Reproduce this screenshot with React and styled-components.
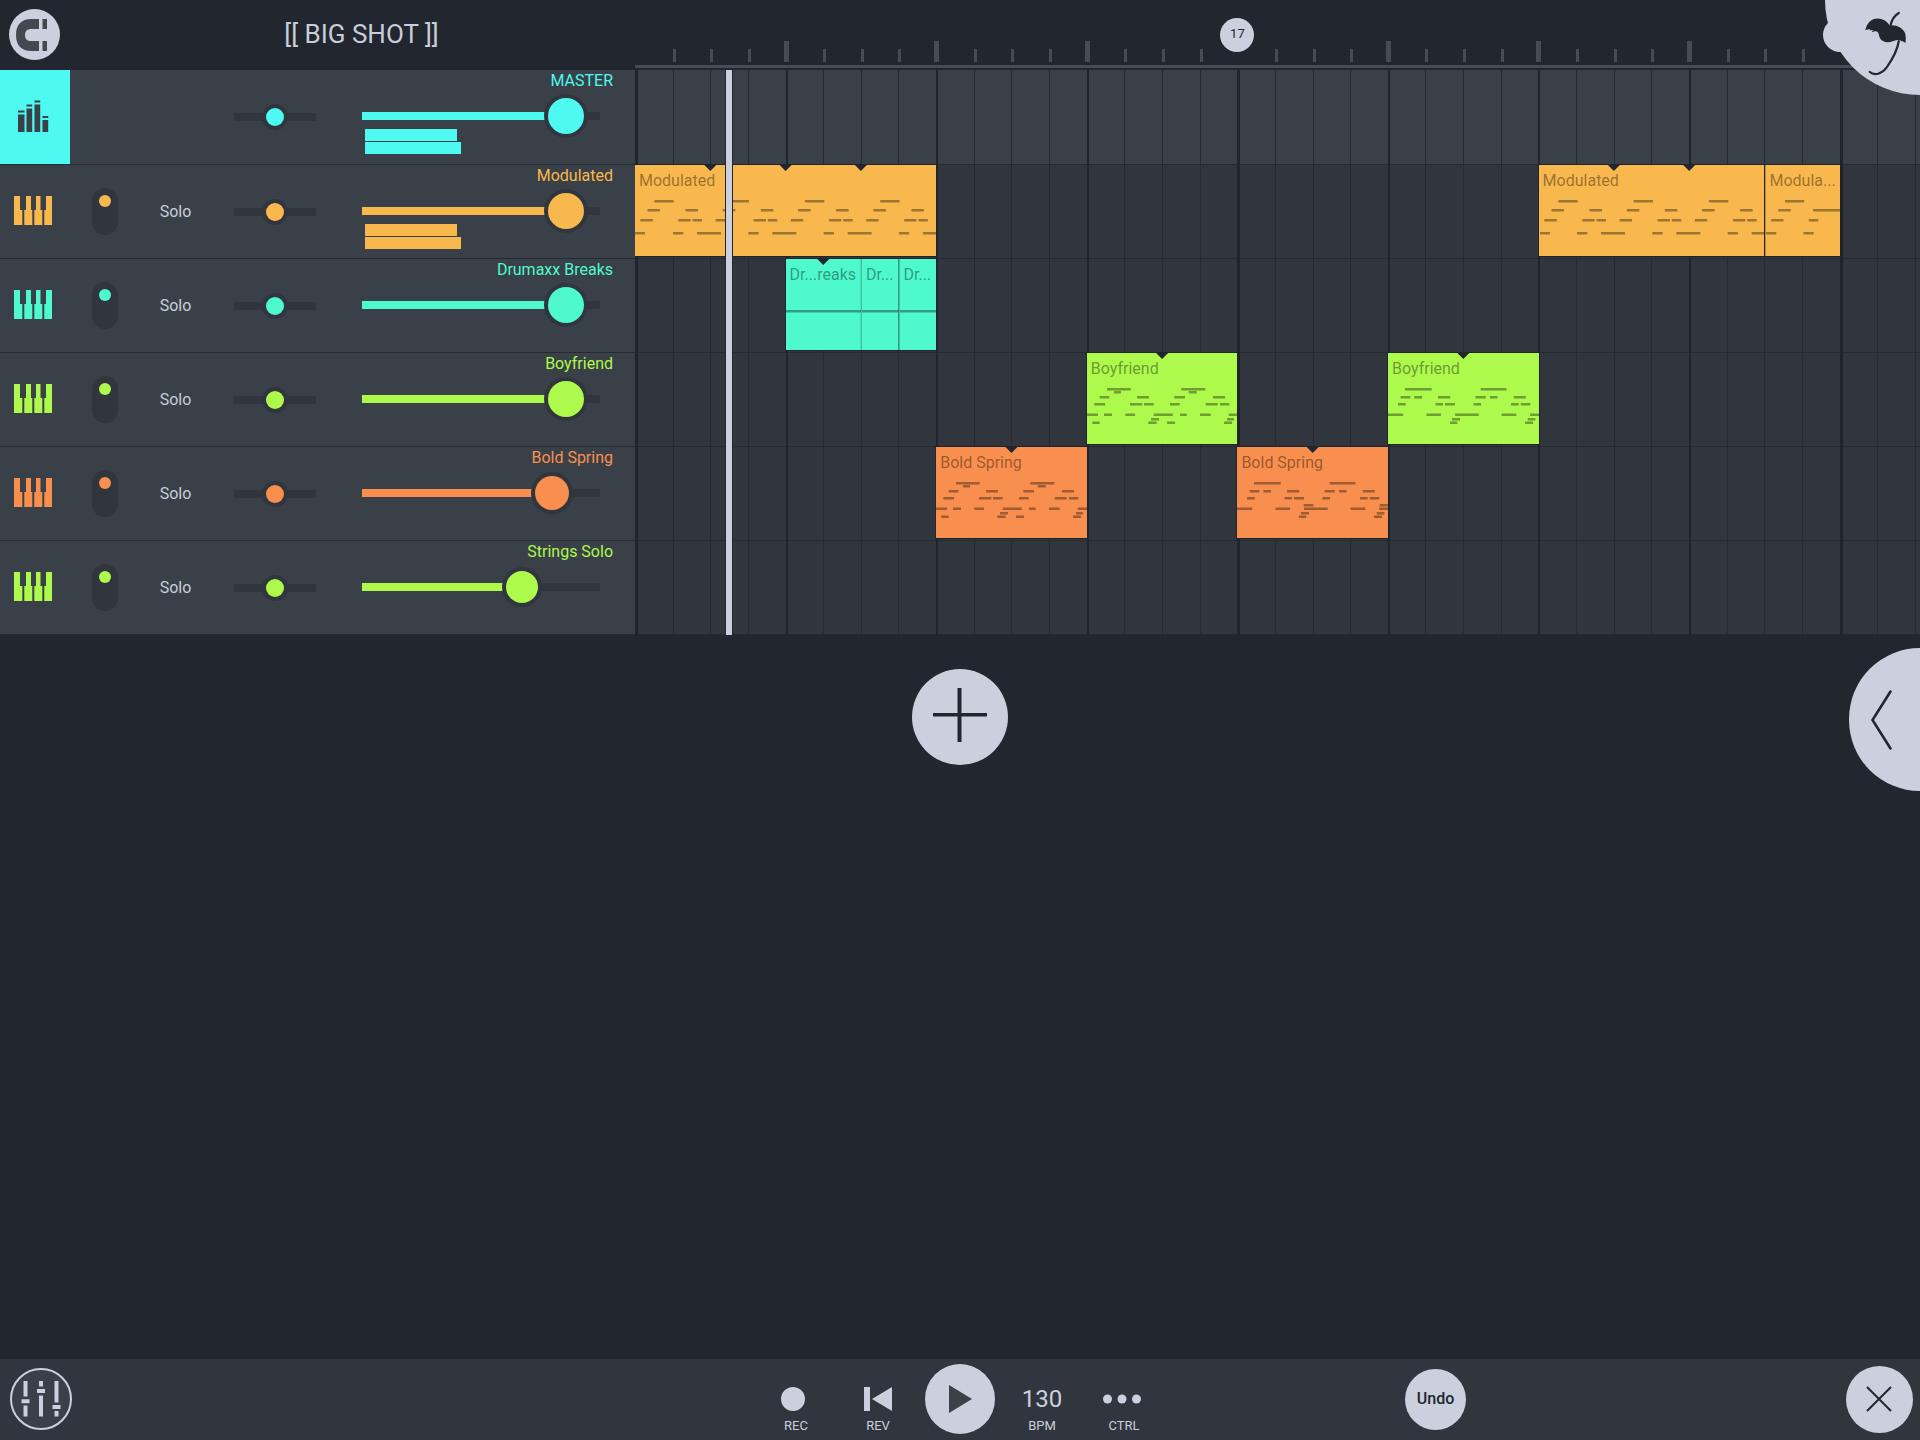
import React from "react";
import styled, { createGlobalStyle, css } from "styled-components";

const color = {
  ink: "#22262e",
  bar: "#31353d",
  panel: "#3a4047",
  line: "#262a31",
  lineStrong: "#20242b",
  tick: "#474c54",
  light: "#cad0de",
  text: "#c8cdd8",
  cyan: "#4df9f0",
  amber: "#f8b84e",
  mint: "#4ef9cb",
  lime: "#adf94c",
  orange: "#f98f4e",
};

const VISIBLE_BARS = 34.13;
const BAR_UNITS = 37.64;
const CLIP_UNITS = 91;
const PLAYHEAD_BAR = 2.41;
const barPercent = (bars) => `${(bars / VISIBLE_BARS) * 100}%`;

const GlobalStyle = createGlobalStyle`
  *, *::before, *::after { box-sizing: border-box; }
  body {
    margin: 0;
    background: ${color.ink};
    color: ${color.text};
    font-family: Roboto, "Noto Sans", sans-serif;
    font-size: 16px;
  }
  button, input { font: inherit; color: inherit; margin: 0; }
  button { padding: 0; border: 0; background: none; cursor: pointer; }
  svg { display: block; }
`;

/* ---------- data ---------- */

const MODULATED_NOTES = [
  [19.3, 38.7, 36],
  [12.5, 25, 45],
  [50.5, 63, 45],
  [5.3, 17.7, 55],
  [43.3, 55.7, 55],
  [57.5, 67, 55],
  [38, 48.3, 68],
  [62, 86, 68],
];

const repeatNotes = (notes, period, times) =>
  Array.from({ length: times }, (_, i) =>
    notes.map(([from, to, y]) => [from + i * period, to + i * period, y])
  ).flat();

const MODULATED_TAIL = [
  [19.3, 38.7, 36],
  [12.5, 25, 45],
  [47.7, 76, 45],
  [5.3, 17.7, 55],
  [43.3, 53, 55],
  [0, 10.4, 68],
  [38, 48.3, 68],
];

const BUSY_RIFF = [
  [20, 43.7, 36], [94.3, 118.3, 36],
  [27, 34, 39], [101.7, 109.7, 39],
  [12.7, 22.3, 44], [50, 62, 44], [87.3, 98, 44], [126, 138, 44],
  [7.3, 18, 51], [43, 55.3, 51], [57, 66.7, 51], [83, 92.7, 51], [118.7, 130.7, 51], [133, 142.3, 51],
  [0, 11, 61.5], [17, 25, 61.5], [38.3, 48, 61.5], [66.7, 85.7, 61.5], [93, 99.7, 61.5], [113, 123.7, 61.5], [141.7, 151, 61.5],
  [64, 72, 66], [140, 147, 66],
  [5.3, 12.7, 69.5], [61.3, 69.7, 69.5], [80, 88, 69.5], [137, 145, 69.5],
];

const CALM_RIFF = [
  [17, 43.7, 36], [92.7, 118.5, 36],
  [12.7, 22.3, 44], [26.3, 34, 44], [50, 62.3, 44], [87.5, 97.7, 44], [102, 109.5, 44], [125.7, 137.7, 44],
  [10, 17.7, 51], [47.5, 55, 51], [57, 67, 51], [85.5, 93, 51], [123, 130.7, 51], [132.7, 142.3, 51],
  [0, 15.2, 61.5], [38.5, 53, 61.5], [67, 90.7, 61.5], [113.5, 128.3, 61.5], [142, 151, 61.5],
  [64, 72, 66], [139.7, 147.3, 66],
  [62, 69.3, 69.5], [137, 145, 69.5],
];

const CALM_RIFF_HIGH = [...CALM_RIFF, [66.7, 76.3, 58], [142.7, 151, 58]];

const HIT_LINE = (bars) => [[0, bars * BAR_UNITS, 52]];

const TRACKS = [
  { name: "MASTER", color: color.cyan, master: true, volume: 92, knob: 36, meter: true, clips: [] },
  {
    name: "Modulated", color: color.amber, volume: 92, knob: 36, meter: true,
    clips: [
      { label: "Modulated", start: 0, bars: 8, notches: [2, 4, 6], notes: [[0, 10, 68], ...repeatNotes(MODULATED_NOTES, 75.28, 4)] },
      { label: "Modulated", start: 24, bars: 6, notches: [2, 4], notes: [[1, 11, 68], ...repeatNotes(MODULATED_NOTES, 75.28, 3)] },
      { label: "Modula...", start: 30, bars: 2, joined: true, notes: MODULATED_TAIL },
    ],
  },
  {
    name: "Drumaxx Breaks", color: color.mint, volume: 92, knob: 36,
    clips: [
      { label: "Dr...reaks", start: 4, bars: 2, notches: [1], notes: HIT_LINE(2) },
      { label: "Dr...", start: 6, bars: 1, joined: true, notes: HIT_LINE(1) },
      { label: "Dr...", start: 7, bars: 1, joined: true, notes: HIT_LINE(1) },
    ],
  },
  {
    name: "Boyfriend", color: color.lime, volume: 92, knob: 36,
    clips: [
      { label: "Boyfriend", start: 12, bars: 4, notches: [2], notes: BUSY_RIFF },
      { label: "Boyfriend", start: 20, bars: 4, notches: [2], notes: CALM_RIFF },
    ],
  },
  {
    name: "Bold Spring", color: color.orange, volume: 85, knob: 34,
    clips: [
      { label: "Bold Spring", start: 8, bars: 4, notches: [2], notes: BUSY_RIFF },
      { label: "Bold Spring", start: 16, bars: 4, notches: [2], notes: CALM_RIFF_HIGH },
    ],
  },
  { name: "Strings Solo", color: color.lime, volume: 70, knob: 32, clips: [] },
];

/* ---------- page frame ---------- */

const Page = styled.div`
  position: relative;
  display: flex;
  flex-direction: column;
  min-height: 100vh;
  overflow: hidden;
`;

const Playlist = styled.main`
  display: grid;
  grid-template-columns: 635px minmax(0, 1fr);
`;

const RoundButton = styled.button`
  display: flex;
  align-items: center;
  justify-content: center;
  flex: none;
  width: ${(p) => p.$size}px;
  height: ${(p) => p.$size}px;
  border-radius: 50%;
  background: ${color.light};
  color: ${color.ink};
`;

/* ---------- header ---------- */

const SongHeader = styled.header`
  display: flex;
  align-items: center;
  height: 69px;
  padding-left: 9px;
`;

const SongTitle = styled.h1`
  flex: 1;
  margin: 0;
  padding: 0 0 2px 28px;
  text-align: center;
  font-size: 26px;
  line-height: 28px;
  font-weight: 400;
`;

const Ruler = styled.div`
  position: relative;
  display: flex;
  align-items: flex-end;
  height: 68px;
  margin-bottom: 2px;
  overflow: hidden;
  border-bottom: 3px solid ${color.tick};
`;

const RulerBar = styled.div`
  flex: 0 0 calc(100% / ${VISIBLE_BARS});
  padding-bottom: 3px;
`;

const Tick = styled.div`
  width: 3px;
  height: 13px;
  background: ${color.tick};
  ${(p) => p.$major && css`
    width: 5px;
    height: 21px;
    margin-left: -2px;
  `}
`;

const Marker = styled.div`
  position: absolute;
  top: 18px;
  width: 34px;
  height: 34px;
  margin-left: -17px;
  border-radius: 50%;
  background: ${color.light};
  color: ${color.ink};
  font-size: 13px;
  line-height: 32px;
  text-align: center;
`;

/* ---------- track controls ---------- */

const rowHeight = css`
  height: ${(p) => (p.$master ? 95 : 94)}px;
  border-bottom: 1px solid ${color.line};
`;

const TrackRow = styled.section`
  ${rowHeight}
  display: grid;
  grid-template-columns: 70px 70px 71px 127px 275px;
  grid-template-areas: "icon toggle solo pan volume";
  align-items: center;
  justify-items: center;
  background: ${color.panel};
  color: ${(p) => p.$color};
`;

const TrackIcon = styled.button`
  grid-area: icon;
  display: flex;
  align-items: center;
  width: 100%;
  height: 100%;
  padding: 0 0 2px 14px;
  color: ${(p) => (p.$master ? color.panel : "inherit")};
  background: ${(p) => (p.$master ? p.$color : "none")};
`;

const MuteToggle = styled.input`
  grid-area: toggle;
  appearance: none;
  display: flex;
  justify-content: center;
  align-items: flex-end;
  width: 26px;
  height: 47px;
  padding: 7px 0;
  border-radius: 13px;
  background: ${color.bar};
  &:checked { align-items: flex-start; }
  &::before {
    content: "";
    width: 12px;
    height: 12px;
    border-radius: 50%;
    background: ${(p) => p.$color};
  }
`;

const SoloButton = styled.button`
  grid-area: solo;
  color: ${color.text};
  line-height: 20px;
`;

const Slider = styled.input`
  appearance: none;
  display: block;
  height: 8px;
  background: none;
  &::-webkit-slider-runnable-track {
    height: 8px;
    background: linear-gradient(${(p) => p.$color}, ${(p) => p.$color}) 0 0 / ${(p) => p.$fill}% 100% no-repeat ${color.bar};
  }
  &::-webkit-slider-thumb {
    appearance: none;
    width: ${(p) => p.$knob}px;
    height: ${(p) => p.$knob}px;
    margin-top: ${(p) => (8 - p.$knob) / 2}px;
    border-radius: 50%;
    background: ${(p) => p.$color};
    box-shadow: 0 0 0 4px ${color.bar};
  }
`;

const PanSlider = styled(Slider)`
  grid-area: pan;
  width: 82px;
`;

const VolumeGroup = styled.div`
  grid-area: volume;
  align-self: start;
  width: 100%;
`;

const TrackName = styled.label`
  display: block;
  text-align: right;
  line-height: 22px;
`;

const VolumeSlider = styled(Slider)`
  width: 238px;
  margin: 20px 0 0 24px;
`;

const Meter = styled.div`
  display: grid;
  gap: 1px;
  margin: 9px 0 0 27px;
`;

const MeterBar = styled.div`
  width: ${(p) => p.$width}px;
  height: 12px;
  background: currentColor;
`;

/* ---------- arrangement ---------- */

const Arrangement = styled.div`
  position: relative;
  overflow: hidden;
`;

const Lane = styled.div`
  ${rowHeight}
  position: relative;
  background: ${(p) => (p.$master ? color.panel : color.bar)};
`;

const GridLines = styled.div`
  position: absolute;
  inset: 0;
  display: flex;
`;

const GridBar = styled.div`
  flex: 0 0 calc(100% / ${VISIBLE_BARS});
  border-left: ${(p) => (p.$index % 16 === 0 ? 3 : p.$index % 4 === 0 ? 2 : 1)}px solid
    ${(p) => (p.$index % 4 === 0 ? color.lineStrong : color.line)};
`;

const ClipLayer = styled.div`
  position: absolute;
  inset: 0;
`;

const ClipLane = styled.div`
  ${rowHeight}
  position: relative;
  border-color: transparent;
`;

const ClipBox = styled.div`
  position: absolute;
  z-index: 1;
  top: 0;
  bottom: 2px;
  overflow: hidden;
  background: ${(p) => p.$color};
  border-left: ${(p) => (p.$joined ? "1px solid rgba(0, 0, 0, 0.22)" : "0")};
  box-shadow: 0 0 0 1px ${color.lineStrong};
  clip-path: inset(${(p) => (p.$joined ? "-1px -1px -1px 0" : "-1px")});
`;

const ClipLabel = styled.span`
  position: relative;
  display: block;
  padding: 7px 4px 0;
  white-space: nowrap;
  line-height: 18px;
  color: rgba(0, 0, 0, 0.4);
`;

const ClipNotes = styled.svg`
  position: absolute;
  inset: 0;
  width: 100%;
  height: 100%;
  fill: rgba(0, 0, 0, 0.36);
`;

const Notch = styled.i`
  position: absolute;
  top: 0;
  width: 12px;
  height: 6px;
  margin-left: -6px;
  background: ${color.ink};
  clip-path: polygon(0 0, 100% 0, 50% 100%);
`;

const Playhead = styled.div`
  position: absolute;
  z-index: 2;
  top: 0;
  bottom: 0;
  width: 6px;
  background: ${color.light};
  box-shadow: 0 0 0 1px ${color.ink};
`;

/* ---------- workspace and overlays ---------- */

const Workspace = styled.div`
  position: relative;
  flex: 1;
  display: flex;
  justify-content: center;
  align-items: flex-start;
  padding-top: 34px;
`;

const DrawerHandle = styled.button`
  position: absolute;
  top: 13px;
  right: 0;
  width: 71px;
  height: 143px;
  padding-left: 22px;
  border-radius: 72px 0 0 72px;
  background: ${color.light};
`;

const HomeButton = styled.button`
  position: absolute;
  z-index: 3;
  top: 0;
  right: 0;
  width: 95px;
  height: 95px;
  border-radius: 0 0 0 95px;
  background: ${color.light};
`;

/* ---------- transport ---------- */

const Footer = styled.footer`
  display: grid;
  grid-template-columns: 1fr auto 1fr;
  align-items: center;
  min-height: 81px;
  padding-bottom: 1px;
  background: ${color.bar};
`;

const FooterStart = styled.div`
  padding-left: 10px;
`;

const FooterEnd = styled.div`
  display: flex;
  align-items: center;
  justify-content: space-between;
  padding: 0 7px 0 240px;
`;

const MixerButton = styled(RoundButton)`
  border: 2px solid ${color.light};
  background: ${color.panel};
  color: ${color.light};
`;

const UndoButton = styled(RoundButton)`
  padding-bottom: 2px;
  font-weight: 500;
`;

const Transport = styled.div`
  display: flex;
  align-items: center;
`;

const TransportButton = styled.button`
  display: flex;
  flex-direction: column;
  align-items: center;
  width: 82px;
  height: 80px;
  padding-top: 22px;
  color: ${color.light};
`;

const TransportIcon = styled.span`
  display: flex;
  align-items: center;
  justify-content: center;
  height: 36px;
  font-size: 24px;
`;

const TransportLabel = styled.span`
  display: block;
  font-size: 13px;
  line-height: 18px;
`;

const PlayButton = styled(RoundButton)`
  margin: 0 6px;
`;

/* ---------- icons ---------- */

const MagnetIcon = () => (
  <svg width="38" height="32" viewBox="0 0 38 32" fill="#424951">
    <path d="M23 0H15.500C5 0 0 6 0 16S5 32 15.500 32H23V22H15.500C11 22 9 20 9 16S11 10 15.500 10H23Z" />
    <path d="M26.500 0H31V10H26.500ZM26.500 22H31V32H26.500Z" />
  </svg>
);

const KeysIcon = () => (
  <svg width="38" height="29" viewBox="0 0 38 29" fill="currentColor">
    <path d="M0 0H6V14H8.300V29H0ZM12 0H17V14H18.300V29H10.300V14H12ZM22 0H26.500V14H28.300V29H20.300V14H22ZM32 0H38V29H30.300V14H32Z" />
  </svg>
);

const LevelsIcon = () => (
  <svg width="38" height="32" viewBox="0 0 38 32" fill="currentColor">
    <path d="M4 14.500H10.500V32H4ZM4 10.500H10.500V12.500H4ZM12.500 8.500H18.200V32H12.500ZM12.500 4.500H18.200V6.500H12.500ZM20.500 4.500H26.200V32H20.500ZM20.500 .5H26.200V2.500H20.500ZM28.500 20H34.200V32H28.500ZM28.500 16H34.200V18H28.500Z" />
  </svg>
);

const PlusIcon = () => (
  <svg width="54" height="58" viewBox="0 0 54 58" fill={color.ink}>
    <path d="M0 25H54V28.600H0ZM24.500 0H28.500V54H24.500Z" />
  </svg>
);

const ChevronIcon = () => (
  <svg width="24" height="62" viewBox="0 0 24 62" fill="none" stroke={color.ink} strokeWidth="2.600" strokeLinecap="round">
    <path d="M19.500 2.500L1.500 31L19.500 59.500" />
  </svg>
);

const PalmIcon = () => (
  <svg width="95" height="95" viewBox="0 0 95 95">
    <path
      fill={color.ink}
      d="M40.500 29.500C42 23 46.500 18.500 52.500 18.500C58 18.700 62.500 21.500 64.500 25.500C71 24.500 77.500 27.500 80 33C81 36 81 40 80.300 43.200C79 41.800 78 41.200 76.500 41.200C75.500 40 74 39.700 72.500 40C69 40.300 66 42.500 61.500 42.200C57 41.500 54.300 38.500 54 35C53.500 32.700 52.500 31.300 50.500 31.300C49.500 31.200 48.500 31.500 47 32.300C47.200 31.200 47.500 30.600 48.300 30C46.500 30 45.500 30.200 44.500 30.600C44.800 29.800 45 29.600 45.500 29.200C43.500 29.300 42 29.500 40.500 30.200Z"
    />
    <path
      fill="none"
      stroke={color.ink}
      strokeWidth="2.200"
      strokeLinecap="round"
      d="M73.800 13C69.500 15.500 67 19 65.600 25M73.800 41C72.500 50 67.500 59 62 67C58 73 50 76.500 44.800 72"
    />
  </svg>
);

const MixerIcon = () => (
  <svg width="40" height="36" viewBox="0 0 40 36" fill="currentColor">
    <path d="M2.500 0H6.500V15.500H2.500ZM.5 18.300H8.500V22.300H.5ZM2.500 24.500H6.500V35.500H2.500ZM18 0H22V5.500H18ZM16 8H24V12H16ZM18 14.500H22V35.500H18ZM33.500 0H37.500V21.500H33.500ZM31.500 24H39.500V28H31.500ZM33.500 30H37.500V35.500H33.500Z" />
  </svg>
);

const RecordIcon = () => (
  <svg width="30" height="24" viewBox="0 0 30 24" fill="currentColor">
    <circle cx="12" cy="12" r="12" />
  </svg>
);

const RewindIcon = () => (
  <svg width="28" height="24" viewBox="0 0 28 24" fill="currentColor">
    <path d="M0 0H6V24H0ZM28 0V24L8 12Z" />
  </svg>
);

const PlayIcon = () => (
  <svg width="24" height="28" viewBox="0 0 24 28" fill="#3a4149">
    <path d="M1 0L24 14L1 28Z" />
  </svg>
);

const DotsIcon = () => (
  <svg width="42" height="10" viewBox="0 0 42 10" fill="currentColor">
    <circle cx="4.500" cy="5" r="4.500" />
    <circle cx="19" cy="5" r="4.500" />
    <circle cx="33.500" cy="5" r="4.500" />
  </svg>
);

const CloseIcon = () => (
  <svg width="28" height="26" viewBox="0 0 28 26" stroke={color.ink} strokeWidth="2">
    <path d="M1 1L25 25M25 1L1 25" />
  </svg>
);

/* ---------- parts ---------- */

const BAR_INDEXES = Array.from({ length: Math.ceil(VISIBLE_BARS) }, (_, i) => i);

function TrackControls({ track }) {
  const id = track.name.toLowerCase().replace(/\s+/g, "-");
  return (
    <TrackRow $color={track.color} $master={track.master}>
      <TrackIcon $master={track.master} $color={track.color} aria-label={`Open ${track.name}`}>
        {track.master ? <LevelsIcon /> : <KeysIcon />}
      </TrackIcon>
      {!track.master && (
        <>
          <MuteToggle type="checkbox" defaultChecked $color={track.color} aria-label={`${track.name} on`} />
          <SoloButton>Solo</SoloButton>
        </>
      )}
      <PanSlider type="range" defaultValue={50} $fill={0} $knob={18} $color={track.color} aria-label={`${track.name} pan`} />
      <VolumeGroup>
        <TrackName htmlFor={id}>{track.name}</TrackName>
        <VolumeSlider id={id} type="range" defaultValue={track.volume} $fill={track.volume - 6} $knob={track.knob} $color={track.color} />
        {track.meter && (
          <Meter>
            <MeterBar $width={92} />
            <MeterBar $width={96} />
          </Meter>
        )}
      </VolumeGroup>
    </TrackRow>
  );
}

function Clip({ clip, color: clipColor }) {
  return (
    <ClipBox $color={clipColor} $joined={clip.joined} style={{ left: barPercent(clip.start), width: barPercent(clip.bars) }}>
      <ClipNotes viewBox={`0 0 ${clip.bars * BAR_UNITS} ${CLIP_UNITS}`} preserveAspectRatio="none">
        {clip.notes.map(([from, to, y], i) => (
          <rect key={i} x={from} y={y - 1} width={to - from} height="2.500" />
        ))}
      </ClipNotes>
      <ClipLabel>{clip.label}</ClipLabel>
      {(clip.notches || []).map((bar) => (
        <Notch key={bar} style={{ left: `${(bar / clip.bars) * 100}%` }} />
      ))}
    </ClipBox>
  );
}

export default function App() {
  return (
    <Page>
      <GlobalStyle />
      <Playlist>
        <SongHeader>
          <RoundButton $size={51} aria-label="Snap">
            <MagnetIcon />
          </RoundButton>
          <SongTitle>[[ BIG SHOT ]]</SongTitle>
        </SongHeader>
        <Ruler>
          {BAR_INDEXES.map((i) => (
            <RulerBar key={i}>{i % 16 !== 0 && <Tick $major={i % 4 === 0} />}</RulerBar>
          ))}
          <Marker style={{ left: barPercent(16) }}>17</Marker>
          <Marker style={{ left: barPercent(32) }} />
        </Ruler>
        <div>
          {TRACKS.map((track) => (
            <TrackControls key={track.name} track={track} />
          ))}
        </div>
        <Arrangement>
          {TRACKS.map((track) => (
            <Lane key={track.name} $master={track.master} />
          ))}
          <GridLines>
            {BAR_INDEXES.map((i) => (
              <GridBar key={i} $index={i} />
            ))}
          </GridLines>
          <ClipLayer>
            {TRACKS.map((track) => (
              <ClipLane key={track.name} $master={track.master}>
                {track.clips.map((clip) => (
                  <Clip key={clip.start} clip={clip} color={track.color} />
                ))}
              </ClipLane>
            ))}
          </ClipLayer>
          <Playhead style={{ left: barPercent(PLAYHEAD_BAR) }} />
        </Arrangement>
      </Playlist>
      <Workspace>
        <RoundButton $size={96} aria-label="Add track">
          <PlusIcon />
        </RoundButton>
        <DrawerHandle aria-label="Open drawer">
          <ChevronIcon />
        </DrawerHandle>
      </Workspace>
      <Footer>
        <FooterStart>
          <MixerButton $size={62} aria-label="Mixer">
            <MixerIcon />
          </MixerButton>
        </FooterStart>
        <Transport>
          <TransportButton>
            <TransportIcon><RecordIcon /></TransportIcon>
            <TransportLabel>REC</TransportLabel>
          </TransportButton>
          <TransportButton>
            <TransportIcon><RewindIcon /></TransportIcon>
            <TransportLabel>REV</TransportLabel>
          </TransportButton>
          <PlayButton $size={70} aria-label="Play">
            <PlayIcon />
          </PlayButton>
          <TransportButton>
            <TransportIcon>130</TransportIcon>
            <TransportLabel>BPM</TransportLabel>
          </TransportButton>
          <TransportButton>
            <TransportIcon><DotsIcon /></TransportIcon>
            <TransportLabel>CTRL</TransportLabel>
          </TransportButton>
        </Transport>
        <FooterEnd>
          <UndoButton $size={61}>Undo</UndoButton>
          <RoundButton $size={67} aria-label="Close">
            <CloseIcon />
          </RoundButton>
        </FooterEnd>
      </Footer>
      <HomeButton aria-label="Home">
        <PalmIcon />
      </HomeButton>
    </Page>
  );
}
